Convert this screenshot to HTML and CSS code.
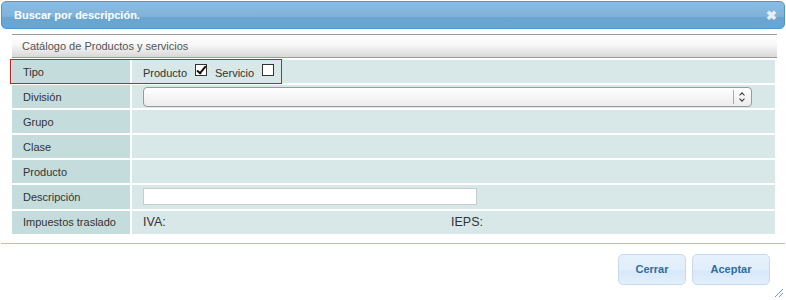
FILE: index.html
```html
<!DOCTYPE html>
<html lang="es">
<head>
    <meta charset="UTF-8">
    <title>Buscar por descripción.</title>
    <link rel="stylesheet" href="styles.css">
</head>
<body>
<div class="dialog">
    <div class="titlebar">
        <span class="title">Buscar por descripción.</span>
        <span class="close">&#10006;</span>
    </div>
    <div class="content">
        <div class="panel-header">Catálogo de Productos y servicios</div>
        <div class="grid">
            <div class="row highlight">
                <div class="label">Tipo</div>
                <div class="value tipo">
                    <span>Producto</span><span class="check on"></span>
                    <span>Servicio</span><span class="check"></span>
                </div>
            </div>
            <div class="row">
                <div class="label">División</div>
                <div class="value"><div class="select"><span class="arrows"></span></div></div>
            </div>
            <div class="row">
                <div class="label">Grupo</div>
                <div class="value"></div>
            </div>
            <div class="row">
                <div class="label">Clase</div>
                <div class="value"></div>
            </div>
            <div class="row">
                <div class="label">Producto</div>
                <div class="value"></div>
            </div>
            <div class="row">
                <div class="label">Descripción</div>
                <div class="value"><div class="textbox"></div></div>
            </div>
            <div class="row">
                <div class="label">Impuestos traslado</div>
                <div class="value taxes">
                    <span class="iva">IVA:</span>
                    <span>IEPS:</span>
                </div>
            </div>
        </div>
    </div>
    <div class="buttons">
        <button>Cerrar</button>
        <button class="wide">Aceptar</button>
    </div>
    <div class="grip"></div>
</div>
</body>
</html>
```

FILE: styles.css
```css
body {
    margin: 0;
    font-family: "Liberation Sans", Arial, sans-serif;
    background: #fff;
}
.dialog {
    position: relative;
    width: 786px;
    height: 300px;
    box-sizing: border-box;
    padding: 1px;
}
.titlebar {
    height: 28px;
    box-sizing: border-box;
    border: 1px solid #4f96d2;
    border-radius: 5px;
    background: linear-gradient(to bottom, #8cbbdf 0%, #80b3db 55%, #6aa5d2 60%, #6ba6d3 100%);
    display: flex;
    align-items: center;
    justify-content: space-between;
    padding: 0 7px 0 12px;
}
.title {
    color: #fff;
    font-weight: bold;
    font-size: 11px;
}
.close {
    color: #e6eef6;
    font-size: 13px;
    font-weight: bold;
}
.content {
    padding: 5px 8px 0 11px;
}
.panel-header {
    height: 22px;
    border-top: 1px solid #9a9a9a;
    border-bottom: 1px solid #9a9a9a;
    background: linear-gradient(to bottom, #ffffff 0%, #f7f7f7 45%, #d8d8d8 100%);
    font-size: 11px;
    color: #555;
    padding-left: 10px;
    line-height: 22px;
}
.grid {
    display: flex;
    flex-direction: column;
    gap: 2px;
    padding: 2px 2px 0 0;
}
.row {
    display: flex;
    gap: 2px;
    height: 23.1px;
}
.row.highlight {
    position: relative;
}
.row.highlight::after {
    content: "";
    position: absolute;
    z-index: 2;
    left: -2px;
    top: -1px;
    width: 270px;
    height: 23px;
    border: 1px solid #ee1111;
}
.label {
    width: 107px;
    background: #c5dcdc;
    font-size: 11px;
    color: #333;
    padding-left: 11px;
    display: flex;
    align-items: center;
}
.value {
    flex: 1;
    background: #d8e7e7;
    display: flex;
    align-items: center;
    padding-left: 11px;
    font-size: 11px;
    color: #333;
}
.tipo span {
    margin-right: 8px;
}
.tipo {
    padding-top: 2px;
}
.check {
    display: inline-block;
    width: 10px;
    height: 10px;
    border: 1px solid #333;
    background: #fff;
    position: relative;
    top: -3px;
}
.check.on::after {
    content: "";
    position: absolute;
    left: 3px;
    top: -1px;
    width: 3px;
    height: 8px;
    border-right: 2px solid #111;
    border-bottom: 2px solid #111;
    transform: rotate(40deg);
}
.select {
    width: 607px;
    height: 18px;
    border: 1px solid #9a9a9a;
    border-radius: 4px;
    background: linear-gradient(to bottom, #ffffff, #ececec);
    position: relative;
}
.arrows {
    position: absolute;
    right: 0;
    top: 2px;
    width: 17px;
    height: 14px;
    border-left: 1px solid #aaa;
}
.arrows::before,
.arrows::after {
    content: "";
    position: absolute;
    left: 6px;
    width: 3px;
    height: 3px;
    border-left: 1px solid #333;
    border-top: 1px solid #333;
}
.arrows::before {
    top: 3px;
    transform: rotate(45deg);
}
.arrows::after {
    top: 7px;
    transform: rotate(225deg);
}
.textbox {
    width: 332px;
    height: 15px;
    background: #fff;
    border: 1px solid #c4cccc;
    margin-top: -1px;
}
.taxes {
    font-size: 12.5px;
    color: #333;
}
.iva {
    width: 308px;
}
.buttons {
    margin: 9px 0 0 0;
    border-top: 1px solid #a6c9e2;
    display: flex;
    justify-content: flex-end;
    gap: 6px;
    padding: 10px 15px 0 0;
}
button {
    height: 31px;
    width: 68px;
    border: 1px solid #c5dbec;
    border-radius: 5px;
    background: linear-gradient(to bottom, #e6f1fc 0%, #e1eefb 50%, #d7e8f9 55%, #e3effb 100%);
    color: #2e6e9e;
    font-family: "Liberation Sans", Arial, sans-serif;
    font-weight: bold;
    font-size: 11px;
}
button.wide {
    width: 78px;
}
.grip {
    position: absolute;
    right: 3px;
    bottom: 3px;
    width: 10px;
    height: 10px;
    background: repeating-linear-gradient(135deg, transparent 0 2px, #6a9fcf 2px 3px);
    clip-path: polygon(100% 0, 100% 100%, 0 100%);
}
```
